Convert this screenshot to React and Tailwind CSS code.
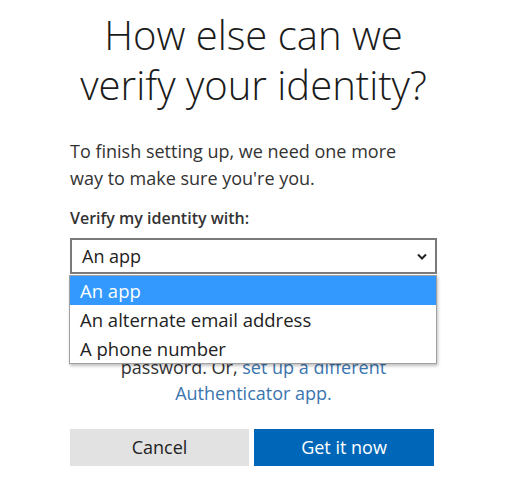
import { useState } from 'react';

const options = ['An app', 'An alternate email address', 'A phone number'];

const App = () => {
  const [selected] = useState('An app');

  return (
    <div className="min-h-[498px] w-[512px] bg-white text-[#1b1b1b]" style={{ fontFamily: '"Open Sans", "Noto Sans", sans-serif' }}>
      <div className="w-[367px] pt-[10px] ml-[70px]">
        <h1 className="-mx-[30px] text-center text-[40px] font-light leading-[50px] text-[#1b1b1b]">
          How else can we
          <br />
          verify your identity?
        </h1>

        <p className="mt-[28px] text-[18px] leading-[27px] text-[#333]">
          To finish setting up, we need one more
          <br />
          way to make sure you're you.
        </p>

        <label className="mt-[14px] block text-[16px] font-semibold text-[#333]">
          Verify my identity with:
        </label>

        <div className="relative mt-[8px]">
          <div className="flex h-[36px] items-center justify-between border-2 border-[#7a7a7a] bg-white pl-[10px] pr-[8px]">
            <span className="text-[18px] text-[#222]">{selected}</span>
            <svg width="10" height="7" viewBox="0 0 10 7" className="text-[#222]">
              <path d="M1 1.5l4 4 4-4" fill="none" stroke="currentColor" strokeWidth="2" />
            </svg>
          </div>

          <ul className="absolute left-[-1px] top-[37px] z-10 w-[368px] border border-[#a0a0a0] bg-white shadow-[1px_2px_3px_rgba(0,0,0,0.25)]">
            {options.map((opt) => (
              <li
                key={opt}
                className={
                  opt === selected
                    ? 'flex h-[29px] items-center bg-[#3399ff] pl-[10px] text-[18.5px] text-white'
                    : 'flex h-[29px] items-center pl-[10px] text-[18.5px] text-[#222]'
                }
              >
                {opt}
              </li>
            ))}
          </ul>

          <p className="mt-[2px] text-center text-[18px] leading-[26px] text-[#333]">
            Start by getting the app on your phone.
            <br />
            The Microsoft Authenticator app lets
            <br />
            you sign in with your phone instead of a
            <br />
            password. Or, <a className="text-[#3a75b0]">set up a different</a>
            <br />
            <a className="text-[#3a75b0]">Authenticator app.</a>
          </p>
        </div>

        <div className="mt-[23px] flex gap-[5px]">
          <button className="h-[37px] w-[179px] bg-[#e2e2e2] text-[18px] text-[#222]">Cancel</button>
          <button className="h-[37px] w-[180px] bg-[#0067b8] text-[18px] text-white">Get it now</button>
        </div>
      </div>
    </div>
  );
};

export default App;
